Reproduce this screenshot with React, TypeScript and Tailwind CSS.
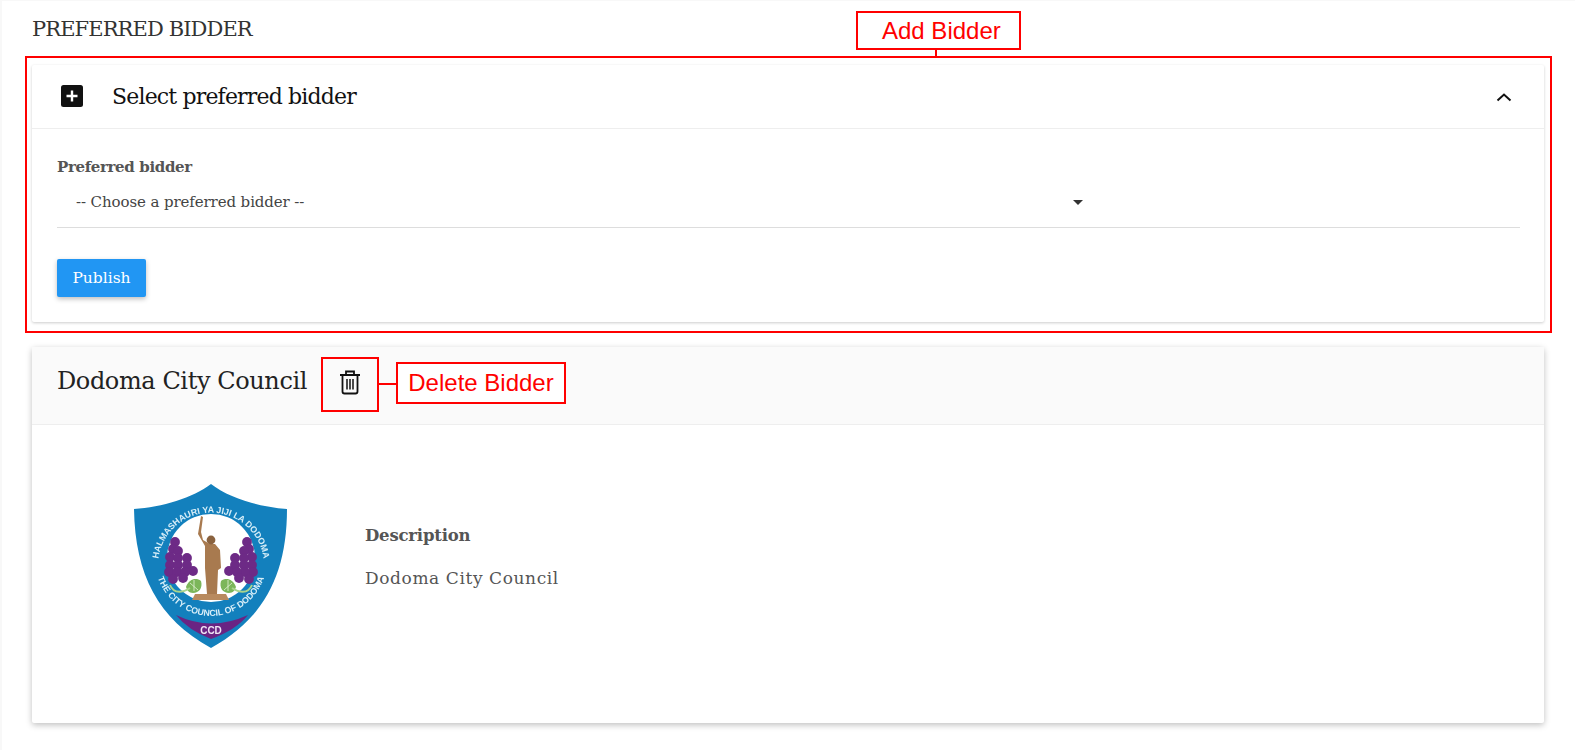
import React from "react";

const serif = "font-['DejaVu_Serif',serif]";
const annotation = "font-['Liberation_Sans',sans-serif] text-[24px] text-[#ff0000] border-2 border-[#ff0000] bg-white flex items-center";

const grapes = [
  [41, 58], [39, 65], [44, 67], [36, 73], [44, 74], [53, 74], [36, 81], [44, 81], [53, 81], [59, 87], [35, 88], [43, 88], [51, 88], [39, 95], [49, 94],
];

function Logo() {
  const outline = "M77 0 C95 14 125 23 153 25 C153 90 130 135 77 164 C24 135 1 90 0 25 C28 23 59 14 77 0Z";
  return (
    <svg width="154" height="166" viewBox="0 0 154 166" className="block blur-[0.4px]">
      <defs>
        <path id="topArc" d="M26 96 A53 53 0 1 1 128 96" />
        <path id="botArc" d="M21 76 A56 56 0 0 0 133 76" />
      </defs>
      <path d={outline} fill="#1380bd" />
      <path d="M42 131 Q77 148 114 131 Q102 146 77 155 Q54 146 42 131Z" fill="#6a2483" />
      <circle cx="77" cy="74" r="44" fill="#ffffff" />
      <text fontFamily="Liberation Sans, sans-serif" fontSize="8.8" fontWeight="700" fill="#d8eef8">
        <textPath href="#topArc" startOffset="50%" textAnchor="middle">HALMASHAURI YA JIJI LA DODOMA</textPath>
      </text>
      <text fontFamily="Liberation Sans, sans-serif" fontSize="8.8" fontWeight="700" fill="#d8eef8">
        <textPath href="#botArc" startOffset="50%" textAnchor="middle">THE CITY COUNCIL OF DODOMA</textPath>
      </text>
      <text x="77" y="150" textAnchor="middle" fontFamily="Liberation Sans, sans-serif" fontSize="10" fontWeight="700" fill="#f0e6f5">CCD</text>
      {grapes.map(([x, y], i) => (
        <g key={i}>
          <circle cx={x} cy={y} r="4.9" fill="#6d2a86" />
          <circle cx={154 - x} cy={y} r="4.9" fill="#6d2a86" />
        </g>
      ))}
      <path d="M52 103 C55 95 62 93 67 97 C69 104 65 109 59 109 C55 109 53 106 52 103Z M102 103 C99 95 92 93 87 97 C85 104 89 109 95 109 C99 109 101 106 102 103Z" fill="#7cb65a" />
      <path d="M56 99 L64 106 M60 96 L60 107 M98 99 L90 106 M94 96 L94 107" stroke="#e4f2d8" strokeWidth="0.8" />
      <path d="M36 101 C40 111 50 108 56 104 M118 101 C114 111 104 108 98 104" fill="none" stroke="#a9d48c" strokeWidth="2" />
      <path d="M67 32 L64 50 L71 62 L71 84 L73 110 L83 110 L84 86 L87 84 L86 66 L81 60 L76 60 L69 56 L67 48 L69 33Z" fill="#a87a4f" />
      <circle cx="77" cy="56" r="4.4" fill="#8a623f" />
      <path d="M61 110 L92 110 L95 116 L58 116Z" fill="#b88a5e" />
    </svg>
  );
}

export default function App() {
  return (
    <div className={`relative min-h-[750px] bg-white shadow-[inset_2px_1px_0_#f8f8f8] ${serif}`}>
      <div className="pl-8 pr-[31px] pt-[15px] pb-6">
        <h1 className="text-[21px] leading-[28px] font-normal text-[#333] tracking-[-0.9px] mb-[22px]">PREFERRED BIDDER</h1>

        <section className="bg-white rounded-[2px] shadow-[0_1px_3px_rgba(0,0,0,0.2)] mb-[25px]">
          <header className="h-[64px] flex items-center border-b border-[#eeeeee] pl-[28px] pr-[29px]">
            <svg width="24" height="24" viewBox="0 0 24 24" className="mr-[28px] -mt-[2px]">
              <rect x="1" y="1" width="22" height="22" rx="2.5" fill="#111" />
              <path d="M12 6.5v11M6.5 12h11" stroke="#fff" strokeWidth="2.4" />
            </svg>
            <span className="text-[22px] text-[#111] tracking-[-0.83px]">Select preferred bidder</span>
            <svg width="16" height="10" viewBox="0 0 16 10" className="ml-auto mr-[3px]">
              <path d="M1.5 8.5 L8 2.5 L14.5 8.5" fill="none" stroke="#111" strokeWidth="2" />
            </svg>
          </header>
          <div className="pt-[28px] pl-[25px] pr-[24px] pb-[25px]">
            <label className="block text-[15px] leading-[20px] font-bold text-[#555] tracking-[-0.35px]">Preferred bidder</label>
            <div className="h-[51px] border-b border-[#dddddd] flex items-center text-[15px] text-[#444] tracking-[-0.1px]">
              <div className="w-[1026px] pl-[19px] flex items-center justify-between">
                <span>-- Choose a preferred bidder --</span>
                <span className="w-0 h-0 border-x-[5px] border-x-transparent border-t-[5px] border-t-[#333]"></span>
              </div>
            </div>
            <button className="mt-[31px] pt-[2px] block w-[89px] h-[38px] rounded-[2px] bg-[#2196f3] text-white text-[15.5px] shadow-[0_2px_5px_rgba(0,0,0,0.26)]">Publish</button>
          </div>
        </section>

        <section className="bg-white rounded-[2px] shadow-[0_2px_6px_rgba(0,0,0,0.25)] h-[376px]">
          <header className="h-[78px] bg-[#fafafa] border-b border-[#eeeeee] flex items-center pl-[25px]">
            <span className="text-[24px] text-[#222] tracking-[-0.4px] mb-[9px]">Dodoma City Council</span>
            <svg width="24" height="26" viewBox="0 0 24 26" className="ml-[31px] mb-[7px]" fill="none" stroke="#111" strokeWidth="1.8">
              <path d="M2 6h20M8 6V2.5h8V6M4.5 6v16.5a2 2 0 0 0 2 2h11a2 2 0 0 0 2-2V6" />
              <path d="M9 10v10.5M12 10v10.5M15 10v10.5" strokeWidth="1.5" />
            </svg>
          </header>
          <div className="flex pl-[102px] pt-[59px]">
            <Logo />
            <div className="ml-[77px] pt-[40px]">
              <div className="text-[16.5px] leading-[24px] font-bold text-[#555] tracking-[-0.2px]">Description</div>
              <div className="mt-[18px] text-[17px] leading-[24px] text-[#555] tracking-[0.6px]">Dodoma City Council</div>
            </div>
          </div>
        </section>
      </div>

      {/* Annotations drawn over the page */}
      <div className="absolute left-[25px] top-[56px] w-[1527px] h-[277px] border-2 border-[#ff0000] pointer-events-none"></div>
      <div className="absolute left-[856px] top-[11px] w-[165px] flex flex-col items-center">
        <div className={`${annotation} w-full h-[39px] pl-[24px]`}>Add Bidder</div>
        <div className="w-[2px] h-[7px] bg-[#ff0000] -ml-[6px]"></div>
      </div>
      <div className="absolute left-[321px] top-[357px] flex items-center">
        <div className="w-[58px] h-[55px] border-2 border-[#ff0000]"></div>
        <div className="w-[17px] h-[2px] bg-[#ff0000] -mt-[2px]"></div>
        <div className={`${annotation} w-[170px] h-[42px] justify-center -mt-[3px]`}>Delete Bidder</div>
      </div>
    </div>
  );
}
